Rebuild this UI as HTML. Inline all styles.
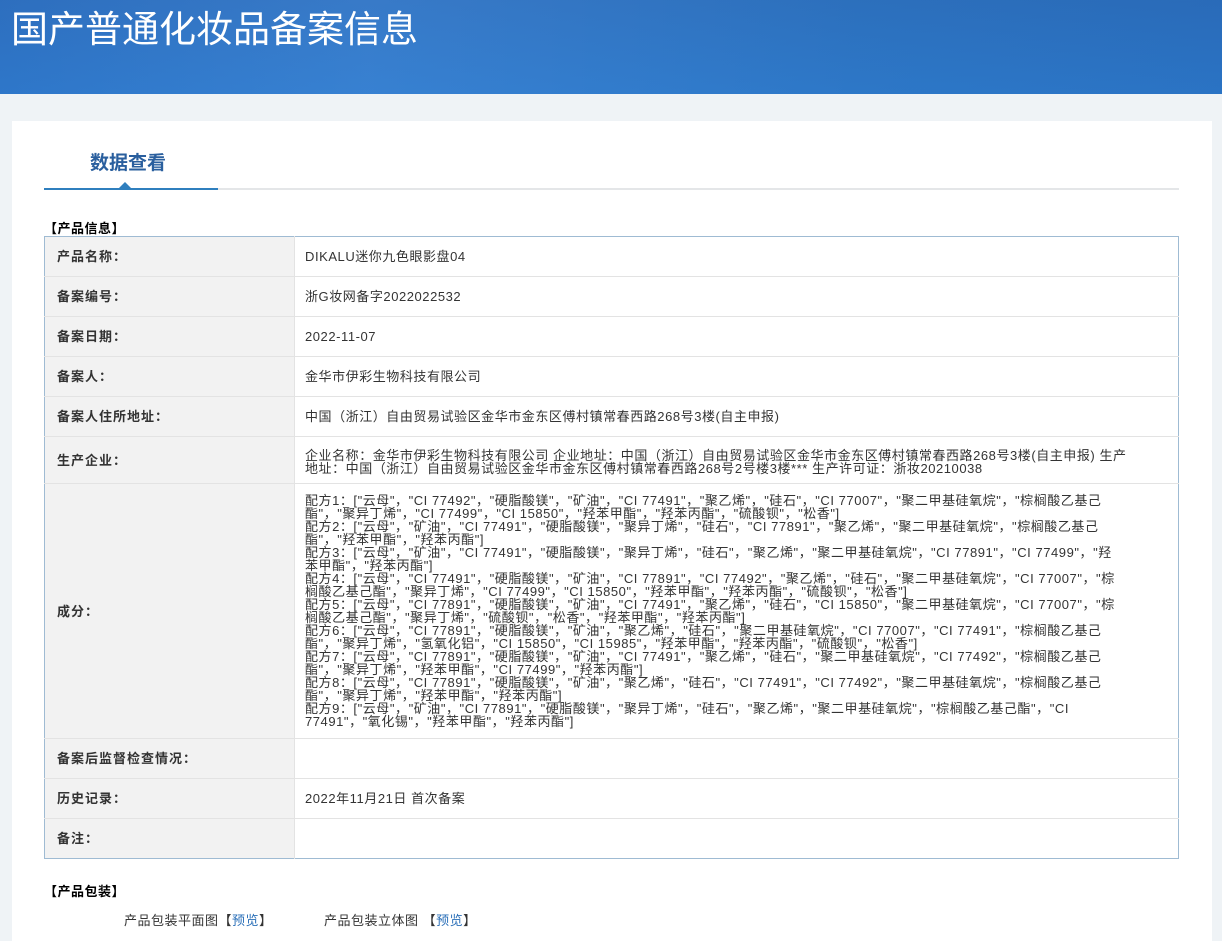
<!DOCTYPE html>
<html><head><meta charset="utf-8"><style>
*{margin:0;padding:0;box-sizing:border-box}
body{width:1222px;height:927px;overflow:hidden;background:#eff3f6;font-family:"Liberation Sans","Noto Sans CJK SC",sans-serif;color:#333;font-size:13px;position:relative}
.hdr{position:absolute;left:0;top:0;width:1222px;height:94px;background:linear-gradient(90deg,#2f73c6 0%,#3a7fd0 30%,#2e74c4 70%,#2b6fc0 100%)}
.hdr::after{content:"";position:absolute;left:0;top:0;right:0;bottom:0;background:linear-gradient(180deg,rgba(0,0,0,0.04),rgba(40,140,220,0.15))}
.hdr h1{position:absolute;left:11px;top:-1px;font-size:37px;font-weight:normal;color:#fff;z-index:2;font-family:"Noto Sans CJK SC",sans-serif}
.card{position:absolute;left:12px;top:121px;width:1200px;height:820px;background:#fff}
.tab{position:absolute;left:90px;top:148px;font-size:19px;font-weight:bold;color:#2a5f9e;font-family:"Noto Sans CJK SC",sans-serif}
.line{position:absolute;left:44px;top:188px;width:1135px;height:2px;background:#e4e6e8}
.line2{position:absolute;left:44px;top:188px;width:174px;height:2px;background:#2f7fbe}
.tri{position:absolute;left:119px;top:182px;width:0;height:0;border-left:6px solid transparent;border-right:6px solid transparent;border-bottom:6px solid #2f7fbe}
.sec{position:absolute;left:44px;font-weight:bold;color:#000;font-size:13px;letter-spacing:0.5px}
table{position:absolute;left:44px;top:236px;width:1135px;border:1px solid #9fbbd3;border-collapse:collapse}
td{border-bottom:1px solid #e3e3e3;vertical-align:middle;font-size:13px;line-height:13px;letter-spacing:0.55px}
td.l{width:250px;background:#f2f2f2;font-weight:bold;padding-left:12px;color:#333;border-right:1px solid #e3e3e3;letter-spacing:1px}
td.v{padding-left:10px;color:#333;white-space:nowrap}
.h40{height:40px}
a{color:#2a6fb8;text-decoration:none}
.pk{position:absolute;top:910px;font-size:13px;color:#333;letter-spacing:0.5px}
</style></head><body>
<div class="hdr"><h1>国产普通化妆品备案信息</h1></div>
<div class="card"></div>
<div class="tab">数据查看</div>
<div class="line"></div><div class="line2"></div><div class="tri"></div>
<div class="sec" style="top:218px">【产品信息】</div>
<table>
<tr class="h40"><td class="l">产品名称：</td><td class="v">DIKALU迷你九色眼影盘04</td></tr>
<tr class="h40"><td class="l">备案编号：</td><td class="v">浙G妆网备字2022022532</td></tr>
<tr class="h40"><td class="l">备案日期：</td><td class="v">2022-11-07</td></tr>
<tr class="h40"><td class="l">备案人：</td><td class="v">金华市伊彩生物科技有限公司</td></tr>
<tr class="h40"><td class="l">备案人住所地址：</td><td class="v">中国（浙江）自由贸易试验区金华市金东区傅村镇常春西路268号3楼(自主申报)</td></tr>
<tr style="height:47px"><td class="l">生产企业：</td><td class="v" style="padding-top:3px">企业名称：金华市伊彩生物科技有限公司 企业地址：中国（浙江）自由贸易试验区金华市金东区傅村镇常春西路268号3楼(自主申报) 生产<br>地址：中国（浙江）自由贸易试验区金华市金东区傅村镇常春西路268号2号楼3楼*** 生产许可证：浙妆20210038</td></tr>
<tr style="height:255px"><td class="l">成分：</td><td class="v">配方1：["云母"，"CI 77492"，"硬脂酸镁"，"矿油"，"CI 77491"，"聚乙烯"，"硅石"，"CI 77007"，"聚二甲基硅氧烷"，"棕榈酸乙基己<br>酯"，"聚异丁烯"，"CI 77499"，"CI 15850"，"羟苯甲酯"，"羟苯丙酯"，"硫酸钡"，"松香"]<br>配方2：["云母"，"矿油"，"CI 77491"，"硬脂酸镁"，"聚异丁烯"，"硅石"，"CI 77891"，"聚乙烯"，"聚二甲基硅氧烷"，"棕榈酸乙基己<br>酯"，"羟苯甲酯"，"羟苯丙酯"]<br>配方3：["云母"，"矿油"，"CI 77491"，"硬脂酸镁"，"聚异丁烯"，"硅石"，"聚乙烯"，"聚二甲基硅氧烷"，"CI 77891"，"CI 77499"，"羟<br>苯甲酯"，"羟苯丙酯"]<br>配方4：["云母"，"CI 77491"，"硬脂酸镁"，"矿油"，"CI 77891"，"CI 77492"，"聚乙烯"，"硅石"，"聚二甲基硅氧烷"，"CI 77007"，"棕<br>榈酸乙基己酯"，"聚异丁烯"，"CI 77499"，"CI 15850"，"羟苯甲酯"，"羟苯丙酯"，"硫酸钡"，"松香"]<br>配方5：["云母"，"CI 77891"，"硬脂酸镁"，"矿油"，"CI 77491"，"聚乙烯"，"硅石"，"CI 15850"，"聚二甲基硅氧烷"，"CI 77007"，"棕<br>榈酸乙基己酯"，"聚异丁烯"，"硫酸钡"，"松香"，"羟苯甲酯"，"羟苯丙酯"]<br>配方6：["云母"，"CI 77891"，"硬脂酸镁"，"矿油"，"聚乙烯"，"硅石"，"聚二甲基硅氧烷"，"CI 77007"，"CI 77491"，"棕榈酸乙基己<br>酯"，"聚异丁烯"，"氢氧化铝"，"CI 15850"，"CI 15985"，"羟苯甲酯"，"羟苯丙酯"，"硫酸钡"，"松香"]<br>配方7：["云母"，"CI 77891"，"硬脂酸镁"，"矿油"，"CI 77491"，"聚乙烯"，"硅石"，"聚二甲基硅氧烷"，"CI 77492"，"棕榈酸乙基己<br>酯"，"聚异丁烯"，"羟苯甲酯"，"CI 77499"，"羟苯丙酯"]<br>配方8：["云母"，"CI 77891"，"硬脂酸镁"，"矿油"，"聚乙烯"，"硅石"，"CI 77491"，"CI 77492"，"聚二甲基硅氧烷"，"棕榈酸乙基己<br>酯"，"聚异丁烯"，"羟苯甲酯"，"羟苯丙酯"]<br>配方9：["云母"，"矿油"，"CI 77891"，"硬脂酸镁"，"聚异丁烯"，"硅石"，"聚乙烯"，"聚二甲基硅氧烷"，"棕榈酸乙基己酯"，"CI<br>77491"，"氧化锡"，"羟苯甲酯"，"羟苯丙酯"]</td></tr>
<tr class="h40"><td class="l">备案后监督检查情况：</td><td class="v"></td></tr>
<tr class="h40"><td class="l">历史记录：</td><td class="v">2022年11月21日 首次备案</td></tr>
<tr class="h40"><td class="l" style="border-bottom:none">备注：</td><td class="v" style="border-bottom:none"></td></tr>
</table>
<div class="sec" style="top:881px">【产品包装】</div>
<div class="pk" style="left:124px">产品包装平面图【<a>预览</a>】</div>
<div class="pk" style="left:324px">产品包装立体图 【<a>预览</a>】</div>
</body></html>
